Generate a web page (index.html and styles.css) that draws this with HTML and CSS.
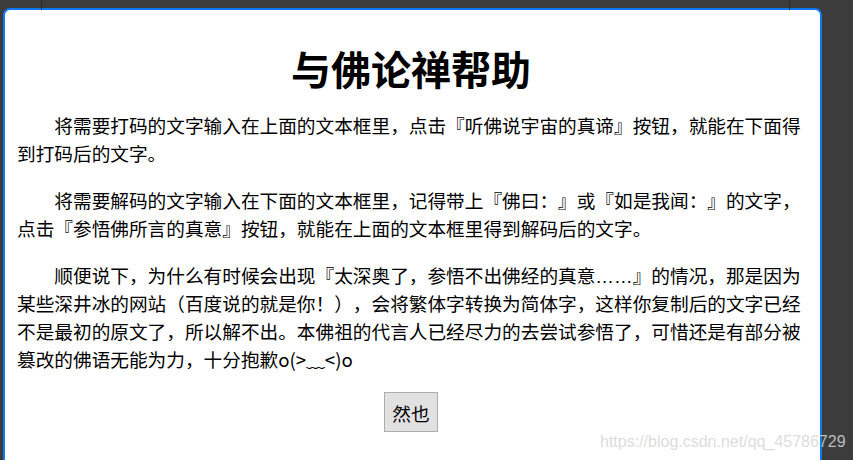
FILE: index.html
```html
<!DOCTYPE html>
<html lang="zh-CN">
<head>
<meta charset="utf-8">
<title>与佛论禅帮助</title>
<link rel="stylesheet" href="styles.css">
</head>
<body>
<div class="bg-line bg-line-left"></div>
<div class="bg-line bg-line-right"></div>
<div class="dialog">
  <h1 class="title">与佛论禅帮助</h1>
  <p class="para">将需要打码的文字输入在上面的文本框里，点击『听佛说宇宙的真谛』按钮，就能在下面得到打码后的文字。</p>
  <p class="para">将需要解码的文字输入在下面的文本框里，记得带上『佛曰：』或『如是我闻：』的文字，点击『参悟佛所言的真意』按钮，就能在上面的文本框里得到解码后的文字。</p>
  <p class="para">顺便说下，为什么有时候会出现『太深奥了，参悟不出佛经的真意<span class="ellipsis">……</span>』的情况，那是因为某些深井冰的网站（百度说的就是你！），会将繁体字转换为简体字，这样你复制后的文字已经不是最初的原文了，所以解不出。本佛祖的代言人已经尽力的去尝试参悟了，可惜还是有部分被篡改的佛语无能为力，十分抱歉o(&gt;﹏&lt;)o</p>
  <div class="actions">
    <button class="btn" type="button">然也</button>
  </div>
</div>
<span class="watermark">https://blog.csdn.net/qq_45786729</span>
</body>
</html>
```
FILE: styles.css
```css
html, body {
  margin: 0;
  padding: 0;
}
body {
  width: 853px;
  height: 460px;
  overflow: hidden;
  background: #3c3c3c;
  position: relative;
  font-family: "Noto Sans CJK SC", "Noto Sans", sans-serif;
  color: #000;
}
.bg-line {
  position: absolute;
  top: 0;
  width: 1px;
  height: 10px;
  background: #2c2c2c;
}
.bg-line-left { left: 41px; }
.bg-line-right { left: 789px; }
.dialog {
  margin: 8px 0 0 3px;
  width: 815px;
  height: 455px;
  background: #fff;
  border: 2px solid #0d78f5;
  border-radius: 7px;
  box-sizing: content-box;
  padding: 0;
  overflow: hidden;
}
.title {
  margin: 0 0 19px;
  padding: 34px 15px 0 12px;
  font-size: 40px;
  line-height: 48px;
  font-weight: 700;
  text-align: center;
  text-spacing-trim: space-all;
}
.para {
  margin: 0 0 19px;
  padding: 0 15px 0 12px;
  font-size: 18.67px;
  line-height: 28px;
  text-indent: 2em;
  text-align: left;
  text-spacing-trim: space-all;
}
.ellipsis {
  font-family: "Liberation Sans", Arial, sans-serif;
  line-height: 0;
}
.actions {
  margin-top: 3px;
  padding: 0 15px 0 12px;
  text-align: center;
}
.btn {
  width: 54px;
  height: 40px;
  padding: 0;
  margin: 0;
  background: #e1e1e1;
  border: 1px solid #adadad;
  border-radius: 0;
  font-family: "Noto Sans CJK SC", sans-serif;
  font-size: 18.67px;
  color: #000;
  vertical-align: top;
}
.watermark {
  position: absolute;
  left: 600px;
  top: 434px;
  font-family: "Liberation Sans", Arial, sans-serif;
  font-size: 16px;
  line-height: 16px;
  color: rgba(214, 214, 214, 0.85);
  white-space: nowrap;
}
```
